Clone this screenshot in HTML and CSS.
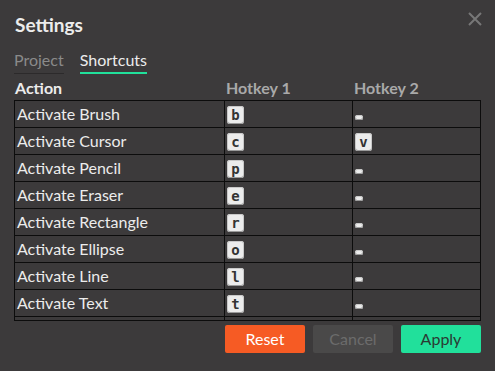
FILE: index.html
```html
<!DOCTYPE html>
<html lang="en">
<head>
    <meta charset="UTF-8">
    <meta name="viewport" content="width=device-width, initial-scale=1.0">
    <title>Settings</title>
    <link rel="stylesheet" href="styles.css">
</head>
<body>
    <div class="dialog">
        <header class="dialog-head">
            <h1>Settings</h1>
            <button class="close" aria-label="Close">
                <svg width="14" height="14" viewBox="0 0 14 14"><path d="M1 1 L13 13 M13 1 L1 13" stroke="#777" stroke-width="2"/></svg>
            </button>
        </header>

        <nav class="tabs">
            <span class="tab">Project</span>
            <span class="tab active">Shortcuts</span>
        </nav>

        <div class="table-head">
            <span class="col-action">Action</span>
            <span class="col-key">Hotkey 1</span>
            <span class="col-key">Hotkey 2</span>
        </div>

        <div class="table-scroll">
            <table class="shortcuts">
                <tr><td>Activate Brush</td><td><kbd>b</kbd></td><td><kbd class="empty"></kbd></td></tr>
                <tr><td>Activate Cursor</td><td><kbd>c</kbd></td><td><kbd>v</kbd></td></tr>
                <tr><td>Activate Pencil</td><td><kbd>p</kbd></td><td><kbd class="empty"></kbd></td></tr>
                <tr><td>Activate Eraser</td><td><kbd>e</kbd></td><td><kbd class="empty"></kbd></td></tr>
                <tr><td>Activate Rectangle</td><td><kbd>r</kbd></td><td><kbd class="empty"></kbd></td></tr>
                <tr><td>Activate Ellipse</td><td><kbd>o</kbd></td><td><kbd class="empty"></kbd></td></tr>
                <tr><td>Activate Line</td><td><kbd>l</kbd></td><td><kbd class="empty"></kbd></td></tr>
                <tr><td>Activate Text</td><td><kbd>t</kbd></td><td><kbd class="empty"></kbd></td></tr>
                <tr><td>Activate Fill</td><td><kbd>f</kbd></td><td><kbd class="empty"></kbd></td></tr>
            </table>
        </div>

        <div class="actions">
            <button class="btn btn-reset">Reset</button>
            <button class="btn btn-cancel">Cancel</button>
            <button class="btn btn-apply">Apply</button>
        </div>
    </div>
</body>
</html>
```

FILE: styles.css
```css
:root {
    --bg: #3c3a3b;
    --text: #ececec;
    --muted: #8a8a8a;
    --line: #0c0c0c;
    --green: #21e09b;
    --orange: #f65b24;
}

body {
    margin: 0;
    background-color: var(--bg);
    color: var(--text);
    font-family: 'Lato', 'Noto Sans', sans-serif;
}

.dialog {
    padding: 12px 14px 0 14px;
    width: 467px;
}

.dialog-head {
    display: flex;
    justify-content: space-between;
    align-items: flex-start;
}

.dialog-head h1 {
    margin: 0 0 0 1px;
    font-size: 19px;
    line-height: 26px;
    font-weight: 700;
}

.close {
    background: none;
    border: none;
    padding: 0;
    margin: 0 -1px 0 0;
    cursor: pointer;
    line-height: 0;
}

.tabs {
    display: flex;
    gap: 16px;
    margin-top: 11px;
}

.tab {
    font-size: 16px;
    line-height: 21px;
    padding-bottom: 2px;
    color: var(--muted);
    border-bottom: 1px solid #2c2a2b;
}

.tab.active {
    color: var(--text);
    border-bottom: 2px solid var(--green);
}

.table-head {
    display: grid;
    grid-template-columns: 210px 128px 129px;
    margin-top: 3px;
    height: 23px;
    font-size: 16px;
    font-weight: 700;
    line-height: 22px;
}

.col-action {
    padding-left: 1px;
}

.col-key {
    padding-left: 2px;
    color: #a9a9a9;
}

.table-scroll {
    height: 220px;
    overflow: hidden;
    border-bottom: 1px solid var(--line);
}

.shortcuts {
    border-collapse: collapse;
    width: 467px;
    table-layout: fixed;
}

.shortcuts td {
    border: 1px solid var(--line);
    height: 26px;
    padding: 0 2px;
    font-size: 16px;
    line-height: 20px;
    white-space: nowrap;
}

.shortcuts td:first-child {
    width: 205px;
}

.shortcuts td:nth-child(2) {
    width: 123px;
}

kbd {
    display: inline-block;
    vertical-align: middle;
    width: 17px;
    height: 18px;
    background-color: #ececec;
    color: #333;
    border-radius: 3px;
    box-shadow: inset 0 -1px 0 #9a9a9a, inset 0 0 0 1px #c8c8c8;
    font-family: 'DejaVu Sans Mono', monospace;
    font-weight: 700;
    font-size: 14px;
    line-height: 18px;
    text-align: center;
}

kbd.empty {
    width: 8px;
    height: 5px;
    border-radius: 3px;
    margin-top: 3px;
}

.actions {
    display: flex;
    justify-content: flex-end;
    gap: 8px;
    margin-top: 4px;
}

.btn {
    width: 80px;
    height: 28px;
    border: none;
    border-radius: 2px;
    padding: 0;
    font-family: 'Lato', 'Noto Sans', sans-serif;
    font-size: 16px;
    line-height: 28px;
    cursor: pointer;
}

.btn-reset {
    background-color: var(--orange);
    color: #fff;
}

.btn-cancel {
    background-color: #4a4949;
    color: #6c6c6c;
}

.btn-apply {
    background-color: var(--green);
    color: #2a3a33;
}
```
